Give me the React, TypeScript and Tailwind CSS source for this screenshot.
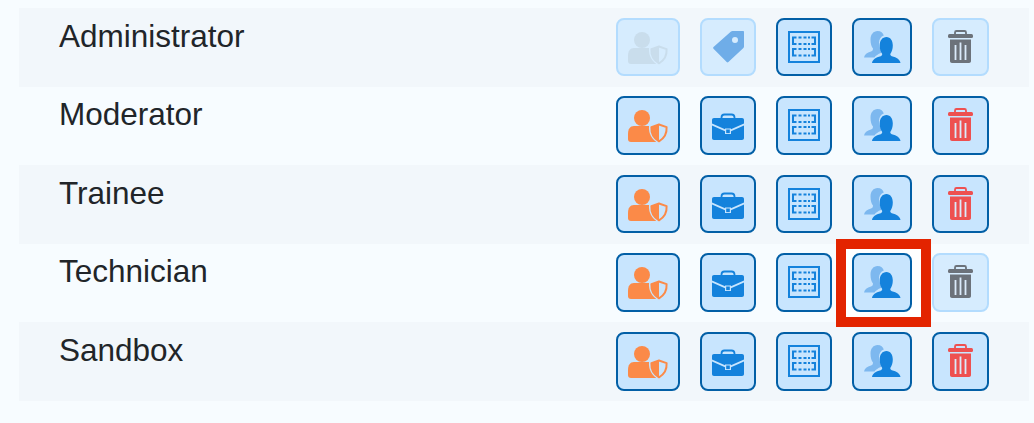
import type { ReactNode } from "react";

function UserShield({ color, gap }: { color: string; gap: string }) {
  return (
    <svg width="64" height="58" viewBox="0 0 64 58" className="block">
      <circle cx="26" cy="22" r="8" fill={color} />
      <path d="M18 30h16c3 0 5 1 6 3v13H15c-2 0-3-1-3-3v-5c0-5 2-8 6-8z" fill={color} />
      <path
        d="M43 26l10 3.500c.6 8-2.500 14-10 18-7.500-4-10.600-10-10-18z"
        fill={gap}
      />
      <path
        d="M43 28.500l7.600 2.600c.4 6.500-2 11-7.600 14.200-5.600-3.200-8-7.700-7.600-14.200z"
        fill="none"
        stroke={color}
        strokeWidth="2"
        strokeLinejoin="round"
      />
      <path d="M43 28.500l-7.600 2.600c-.4 6.500 2 11 7.600 14.200z" fill={color} />
    </svg>
  );
}

function Tag() {
  return (
    <svg width="56" height="58" viewBox="0 0 56 58" className="block">
      <path
        fillRule="evenodd"
        d="M32.500 13H43c.6 0 1 .4 1 1v14.500c0 .6-.2 1-.6 1.400L28.400 44c-.5.500-1.200.500-1.700 0L13.500 30.700c-.5-.5-.5-1.200 0-1.700L31 13.600c.4-.4.900-.6 1.500-.6zM35 19a3 3 0 100 6 3 3 0 000-6z"
        fill="#6fade8"
      />
    </svg>
  );
}

function Briefcase() {
  return (
    <svg width="56" height="58" viewBox="0 0 56 58" className="block">
      <path d="M21.500 22.500v-1c0-2 1-3 3-3h7c2 0 3 1 3 3v1" fill="none" stroke="#1482dc" strokeWidth="1.800" />
      <path d="M14 22h28c1.200 0 2 .8 2 2v3.500L31 33.200v-.7h-6v.7L12 27.500V24c0-1.200.8-2 2-2z" fill="#1482dc" />
      <path d="M12 29.500l13 5.700V38h6v-2.800l13-5.700V42c0 1.200-.8 2-2 2H14c-1.200 0-2-.8-2-2z" fill="#1482dc" />
      <rect x="26.200" y="33.500" width="3.600" height="3.600" fill="#1482dc" />
    </svg>
  );
}

function FormBlock({ y }: { y: number }) {
  return (
    <g transform={`translate(0 ${y})`} fill="none" stroke="#1482dc" strokeWidth="2">
      <path d="M20.500 0H17v6.500h3.500" />
      <path d="M35.500 0H39v6.500h-3.500" />
      <path d="M22.500 0h3M27.500 0h3M32 0h2M22.500 6.500h3M27.500 6.500h3M32 6.500h2" />
    </g>
  );
}

function FormGrid() {
  return (
    <svg width="56" height="58" viewBox="0 0 56 58" className="block">
      <rect x="13" y="14" width="30" height="30" fill="none" stroke="#1482dc" strokeWidth="2" />
      <FormBlock y={19.500} />
      <FormBlock y={31} />
    </svg>
  );
}

function People() {
  return (
    <svg width="60" height="58" viewBox="0 0 60 58" className="block">
      <path
        d="M25.500 13c3.500 0 5.500 2 6.300 4.500-3 1-4.800 4-4.800 7.500 0 3 1 6 3 8l-1 2c-3 1-5 2.500-6.500 4.500H12c.5-3 3-5 7-6 1.500-.5 2-1.500 2-3-1.500-1.500-2.500-5-2.500-9 0-5 3-8.500 7-8.500z"
        fill="#7db8ef"
      />
      <path
        d="M34.500 19c3.800 0 6.300 3.500 6.300 8.500 0 3.500-1 6.500-2.500 8.500 0 1 .3 1.700 1.500 2.200 5 1.300 8.200 3.300 8.700 6.800H20c.5-3.500 3.700-5.500 8.700-6.800 1.200-.5 1.500-1.200 1.500-2.200-1.500-2-2.500-5-2.500-8.500 0-5 2.700-8.500 6.800-8.500z"
        fill="#1482dc"
      />
    </svg>
  );
}

function Trash({ color }: { color: string }) {
  return (
    <svg width="57" height="58" viewBox="0 0 57 58" className="block">
      <path d="M23 16v-1.500c0-1 .6-1.500 1.500-1.500h8c1 0 1.500.5 1.500 1.500V16" fill="none" stroke={color} strokeWidth="1.800" />
      <rect x="16" y="16" width="25" height="4" rx="1.500" fill={color} />
      <path d="M18 21.500h21V43c0 1.200-.8 2-2 2H20c-1.200 0-2-.8-2-2z" fill={color} />
      <path d="M23.500 27v15M28.500 24.500V42M33.500 27v15" stroke="#dbeafa" strokeWidth="1.800" />
    </svg>
  );
}

function IconButton({
  width,
  muted,
  children,
}: {
  width: string;
  muted?: boolean;
  children: ReactNode;
}) {
  return (
    <div
      className={`relative flex h-[58.6px] items-center justify-center rounded-lg border-2 ${width} ${
        muted ? "border-[#b3dcfe] bg-[#d6ecfe]" : "border-[#025fa6] bg-[#c8e5fe]"
      }`}
    >
      <div className="absolute left-[-2px] top-[-2px]">{children}</div>
    </div>
  );
}

const rows = [
  { name: "Administrator", shaded: true, locked: true, canDelete: false },
  { name: "Moderator", shaded: false, locked: false, canDelete: true },
  { name: "Trainee", shaded: true, locked: false, canDelete: true },
  { name: "Technician", shaded: false, locked: false, canDelete: false, highlight: true },
  { name: "Sandbox", shaded: true, locked: false, canDelete: true },
];

export default function App() {
  return (
    <div className="h-[423px] w-[1034px] overflow-hidden bg-[#f7fcff] pl-[19px] pr-[5px] pt-2 font-['Liberation_Sans',Arial,sans-serif]">
      {rows.map((row) => (
        <div
          key={row.name}
          className={`flex h-[78.6px] items-start justify-between pl-10 pr-10 pt-[9.6px] ${
            row.shaded ? "bg-[#f2f7fb]" : ""
          }`}
        >
          <div className="text-[31.5px] leading-[36px] text-[#212529]">{row.name}</div>
          <div className="flex gap-5">
            <IconButton width="w-[64px]" muted={row.locked}>
              <UserShield color={row.locked ? "#c9ddec" : "#fb8a48"} gap={row.locked ? "#d6ecfe" : "#c8e5fe"} />
            </IconButton>
            <IconButton width="w-[56px]" muted={row.locked}>
              {row.locked ? <Tag /> : <Briefcase />}
            </IconButton>
            <IconButton width="w-[56px]">
              <FormGrid />
            </IconButton>
            <div className="relative">
              {row.highlight && (
                <div className="absolute left-[-16px] top-[-14px] h-[88px] w-[95px] border-10 border-[#e32400] bg-white" />
              )}
              <IconButton width="w-[60px]">
                <People />
              </IconButton>
            </div>
            <IconButton width="w-[57px]" muted={!row.canDelete}>
              <Trash color={row.canDelete ? "#ee5050" : "#6c727a"} />
            </IconButton>
          </div>
        </div>
      ))}
    </div>
  );
}
